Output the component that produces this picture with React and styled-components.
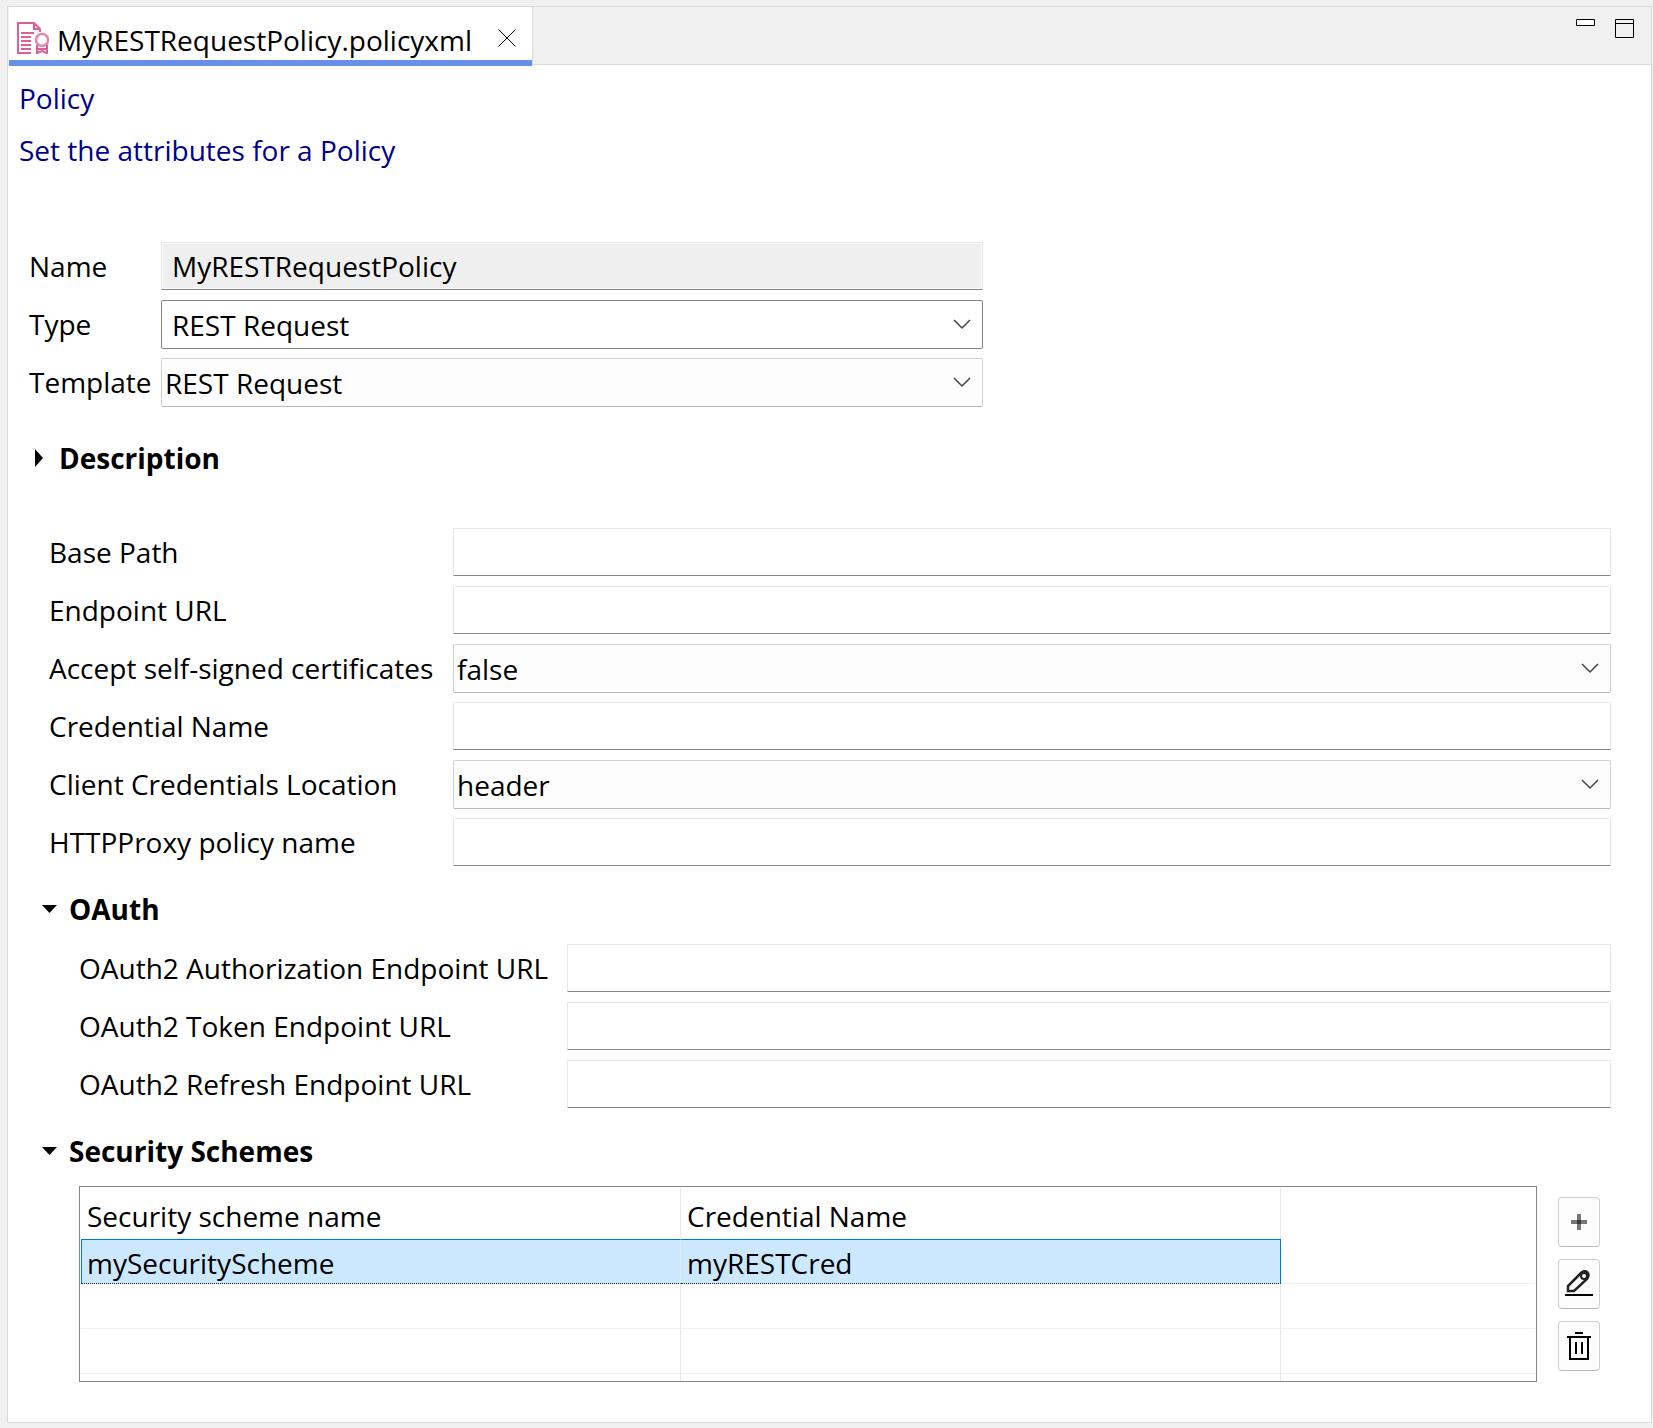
import React, { useState } from 'react';
import styled, { createGlobalStyle } from 'styled-components';

const GlobalStyle = createGlobalStyle`
  * { box-sizing: border-box; }
  body {
    margin: 0;
    background: #f0f0f0;
    color: #000;
    font-family: "Open Sans", "Noto Sans", sans-serif;
    font-size: 28px;
    line-height: 38px;
  }
  input, select, button { font: inherit; color: inherit; }
`;

const Page = styled.div`
  min-height: 100vh;
  padding: 6px 1px 5px 7px;
  display: flex;
`;

const Editor = styled.main`
  flex: 1;
  min-width: 0;
  border: 1px solid #d9d9d9;
  background: #fff;
`;

const TabBar = styled.div`
  display: flex;
  align-items: flex-start;
  justify-content: space-between;
  height: 58px;
  background: #f0f0f0;
  box-shadow: inset 0 -1px 0 #d9d9d9;
`;

const Tab = styled.div`
  display: flex;
  align-items: center;
  gap: 8px;
  height: 59px;
  margin-left: 1px;
  padding: 8px 16px 0 8px;
  background: #fff;
  border-bottom: 6px solid #6790e8;
  box-shadow: 1px 0 0 #d9d9d9;
`;

const TabTitle = styled.span`
  padding-top: 4px;
`;

const IconButton = styled.button`
  display: flex;
  padding: 0;
  border: 0;
  background: none;
`;

const CloseButton = styled(IconButton)`
  margin-left: 18px;
`;

const WindowButtons = styled.div`
  display: flex;
  align-items: flex-start;
  gap: 20px;
  padding: 12px 17px 0 0;
`;

const Header = styled.header`
  padding: 14px 11px 0;
  color: #00008b;
`;

const Heading = styled.h1`
  margin: 0 0 14px;
  font-size: 28px;
  font-weight: 400;
  line-height: 38px;
`;

const Fields = styled.div`
  display: grid;
  grid-template-columns: ${(props) => props.$columns};
  row-gap: 10px;
  padding-left: ${(props) => props.$indent}px;
`;

const General = styled(Fields)`
  margin-top: 73px;
`;

const Label = styled.label`
  display: flex;
  align-items: center;
  height: 48px;
  white-space: nowrap;
`;

const TextInput = styled.input`
  width: 100%;
  height: 48px;
  padding: 0 10px;
  border: 1px solid #e8e8e8;
  border-bottom-color: #868686;
  border-radius: 1px;
  outline: 0;
  background: #fff;
  &:read-only {
    background: #efefef;
    box-shadow: inset 0 0 0 1px #fbfbfb;
  }
`;

const SelectBox = styled.div`
  position: relative;
  height: 48px;
  svg {
    position: absolute;
    right: 12px;
    top: 19px;
    pointer-events: none;
  }
`;

const Select = styled.select`
  appearance: none;
  width: 100%;
  height: 49px;
  padding: 0 40px 0 ${(props) => (props.$editable ? 10 : 3)}px;
  border: 1px solid ${(props) => (props.$editable ? '#868686' : '#d0d0d0')};
  border-bottom-color: ${(props) => (props.$editable ? '#868686' : '#b8b8b8')};
  border-radius: 2px;
  outline: 0;
  background: ${(props) => (props.$editable ? '#fff' : '#fdfdfd')};
`;

const Toggle = styled.button`
  display: flex;
  align-items: center;
  gap: 10px;
  height: 38px;
  padding: 0;
  border: 0;
  background: none;
  font-weight: 700;
`;

const Section = styled.section`
  margin: ${(props) => props.$top}px 40px 0 ${(props) => props.$left}px;
`;

const SectionBody = styled.div`
  margin-top: 16px;
`;

const SchemeArea = styled.div`
  display: flex;
  gap: 21px;
  padding: 0 11px 0 40px;
`;

const TableFrame = styled.div`
  flex: 1;
  min-width: 0;
  height: 196px;
  padding: 1px;
  overflow: hidden;
  border: 1px solid #828790;
`;

const Table = styled.table`
  width: 100%;
  table-layout: fixed;
  border-collapse: separate;
  border-spacing: 0;
  th, td {
    height: 45px;
    padding: 2px 6px 0;
    border-right: 1px solid #e5e8ee;
    border-bottom: 1px solid #f0f0f0;
    text-align: left;
    font-weight: 400;
  }
  th {
    height: 51px;
    padding-top: 4px;
    border-bottom: 0;
  }
  th:last-child, td:last-child { border-right: 0; }
`;

const Column = styled.col`
  width: ${(props) => props.$width};
`;

const SchemeRow = styled.tr`
  && td:not(:last-child) {
    background: #cce8ff;
    border-top: 1px solid #0078d7;
    border-bottom: 1px dotted #1b2a38;
  }
  && td:first-child { border-left: 1px solid #0078d7; padding-left: 5px; }
  && td:nth-child(2) { border-right-color: #0078d7; }
`;

const Actions = styled.div`
  display: flex;
  flex-direction: column;
  gap: 12px;
  padding-top: 11px;
`;

const ActionButton = styled.button`
  display: flex;
  align-items: center;
  justify-content: center;
  width: 42px;
  height: 50px;
  padding: 0;
  border: 1px solid #d0d0d0;
  border-bottom-color: #b8b8b8;
  border-radius: 4px;
  background: #fdfdfd;
`;

function PolicyIcon() {
  return (
    <svg width="32" height="32" viewBox="0 0 32 32" fill="none" stroke="#dd5f97" strokeWidth="2">
      <path d="M14 31H1V1H17L23 7V10M17 1V7H23" />
      <path d="M4 11H17M4 15H14M4 19H14M4 23H14M4 27H14" />
      <circle cx="25" cy="18" r="6" stroke="#e58ab2" strokeWidth="2.500" />
      <path d="M20 23V32M30 23V32M20 27H30M20 31L25 29L30 31" />
    </svg>
  );
}

function Chevron() {
  return (
    <svg width="18" height="11" viewBox="0 0 18 11" fill="none" stroke="#444" strokeWidth="1.5">
      <path d="M1 1L9 9L17 1" />
    </svg>
  );
}

function Arrow(props) {
  return (
    <svg width="20" height="20" viewBox="0 0 20 20">
      <path d={props.open ? 'M3 6H18L10.500 14Z' : 'M6 1V19L14 10Z'} />
    </svg>
  );
}

function TextRow(props) {
  let [value, setValue] = useState(props.value || '');
  return (
    <>
      <Label htmlFor={props.id}>{props.label}</Label>
      <TextInput
        id={props.id}
        value={value}
        readOnly={props.readOnly}
        onChange={(e) => { setValue(e.target.value) }}
      />
    </>
  );
}

function SelectRow(props) {
  let [value, setValue] = useState(props.options[0]);
  return (
    <>
      <Label htmlFor={props.id}>{props.label}</Label>
      <SelectBox>
        <Select id={props.id} $editable={props.editable} value={value} onChange={(e) => { setValue(e.target.value) }}>
          {props.options.map((option) => <option key={option}>{option}</option>)}
        </Select>
        <Chevron />
      </SelectBox>
    </>
  );
}

function Collapsible(props) {
  let [open, setOpen] = useState(props.defaultOpen || false);
  return (
    <Section $top={props.top} $left={props.left}>
      <Toggle aria-expanded={open} onClick={() => { setOpen(!open) }}>
        <Arrow open={open} />
        {props.title}
      </Toggle>
      {open && <SectionBody>{props.children}</SectionBody>}
    </Section>
  );
}

function SchemeTable(props) {
  return (
    <TableFrame>
      <Table>
        <colgroup>
          <Column $width="600px" />
          <Column $width="600px" />
          <Column $width="auto" />
        </colgroup>
        <thead>
          <tr><th>Security scheme name</th><th>Credential Name</th><th /></tr>
        </thead>
        <tbody>
          {props.schemes.map((scheme) => (
            <SchemeRow key={scheme.name}>
              <td>{scheme.name}</td>
              <td>{scheme.credential}</td>
              <td />
            </SchemeRow>
          ))}
          {/* empty grid lines under the data */}
          <tr><td /><td /><td /></tr>
          <tr><td /><td /><td /></tr>
          <tr><td /><td /><td /></tr>
        </tbody>
      </Table>
    </TableFrame>
  );
}

function App() {
  let schemes = [{ name: 'mySecurityScheme', credential: 'myRESTCred' }];

  return (
    <Page>
      <GlobalStyle />
      <Editor>
        <TabBar>
          <Tab>
            <PolicyIcon />
            <TabTitle>MyRESTRequestPolicy.policyxml</TabTitle>
            <CloseButton aria-label="Close">
              <svg width="18" height="18" viewBox="0 0 18 18" stroke="#000" strokeWidth="1">
                <path d="M0.500 0.500L17.500 17.500M17.500 0.500L0.500 17.500" />
              </svg>
            </CloseButton>
          </Tab>
          <WindowButtons>
            <IconButton aria-label="Minimize">
              <svg width="19" height="7" viewBox="0 0 19 7" fill="#fff" stroke="#000">
                <path d="M0.500 0.500H18.500V6.500H0.500Z" />
              </svg>
            </IconButton>
            <IconButton aria-label="Maximize">
              <svg width="19" height="19" viewBox="0 0 19 19" fill="none" stroke="#000">
                <path d="M0.500 0.500H18.500V18.500H0.500ZM0.500 4.500H18.500" />
              </svg>
            </IconButton>
          </WindowButtons>
        </TabBar>

        <Header>
          <Heading>Policy</Heading>
          <div>Set the attributes for a Policy</div>
        </Header>

        <General $columns="132px minmax(0, 822px)" $indent={21}>
          <TextRow id="name" label="Name" value="MyRESTRequestPolicy" readOnly />
          <SelectRow id="type" label="Type" options={['REST Request']} editable />
          <SelectRow id="template" label="Template" options={['REST Request']} />
        </General>

        <Collapsible title="Description" top={33} left={21} />

        <Section $top={51} $left={0}>
          <Fields $columns="404px minmax(0, 1fr)" $indent={41}>
            <TextRow id="basePath" label="Base Path" />
            <TextRow id="endpointUrl" label="Endpoint URL" />
            <SelectRow id="selfSigned" label="Accept self-signed certificates" options={['false', 'true']} />
            <TextRow id="credentialName" label="Credential Name" />
            <SelectRow id="clientLocation" label="Client Credentials Location" options={['header', 'body']} />
            <TextRow id="httpProxy" label="HTTPProxy policy name" />
          </Fields>
        </Section>

        <Collapsible title="OAuth" top={24} left={31} defaultOpen>
          <Fields $columns="488px minmax(0, 1fr)" $indent={40}>
            <TextRow id="authUrl" label="OAuth2 Authorization Endpoint URL" />
            <TextRow id="tokenUrl" label="OAuth2 Token Endpoint URL" />
            <TextRow id="refreshUrl" label="OAuth2 Refresh Endpoint URL" />
          </Fields>
        </Collapsible>

        <Collapsible title="Security Schemes" top={24} left={31} defaultOpen>
          <SchemeArea>
            <SchemeTable schemes={schemes} />
            <Actions>
              <ActionButton aria-label="Add">
                <svg width="16" height="16" viewBox="0 0 16 16" fill="#777">
                  <path d="M6 0H10V16H6Z" />
                  <path d="M0 6H16V10H0Z" />
                  <path d="M6 6H10V10H6Z" fill="#3a3a3a" />
                </svg>
              </ActionButton>
              <ActionButton aria-label="Edit">
                <svg width="28" height="28" viewBox="0 0 28 28" fill="none" stroke="#222" strokeWidth="2.500">
                  <path d="M3 21V16L16 3Q19 0 22 2Q25 5 22 9L9 21Z" />
                  <circle cx="19" cy="6" r="3" strokeWidth="2" />
                  <path d="M0 25H28" stroke="#000" strokeWidth="2" />
                </svg>
              </ActionButton>
              <ActionButton aria-label="Delete">
                <svg width="24" height="28" viewBox="0 0 24 28" fill="none" stroke="#000" strokeWidth="2">
                  <path d="M8 1H16M0 5H24M3 5V27H21V5M9 10V22M15 10V22" />
                </svg>
              </ActionButton>
            </Actions>
          </SchemeArea>
        </Collapsible>
      </Editor>
    </Page>
  );
}

export default App;
